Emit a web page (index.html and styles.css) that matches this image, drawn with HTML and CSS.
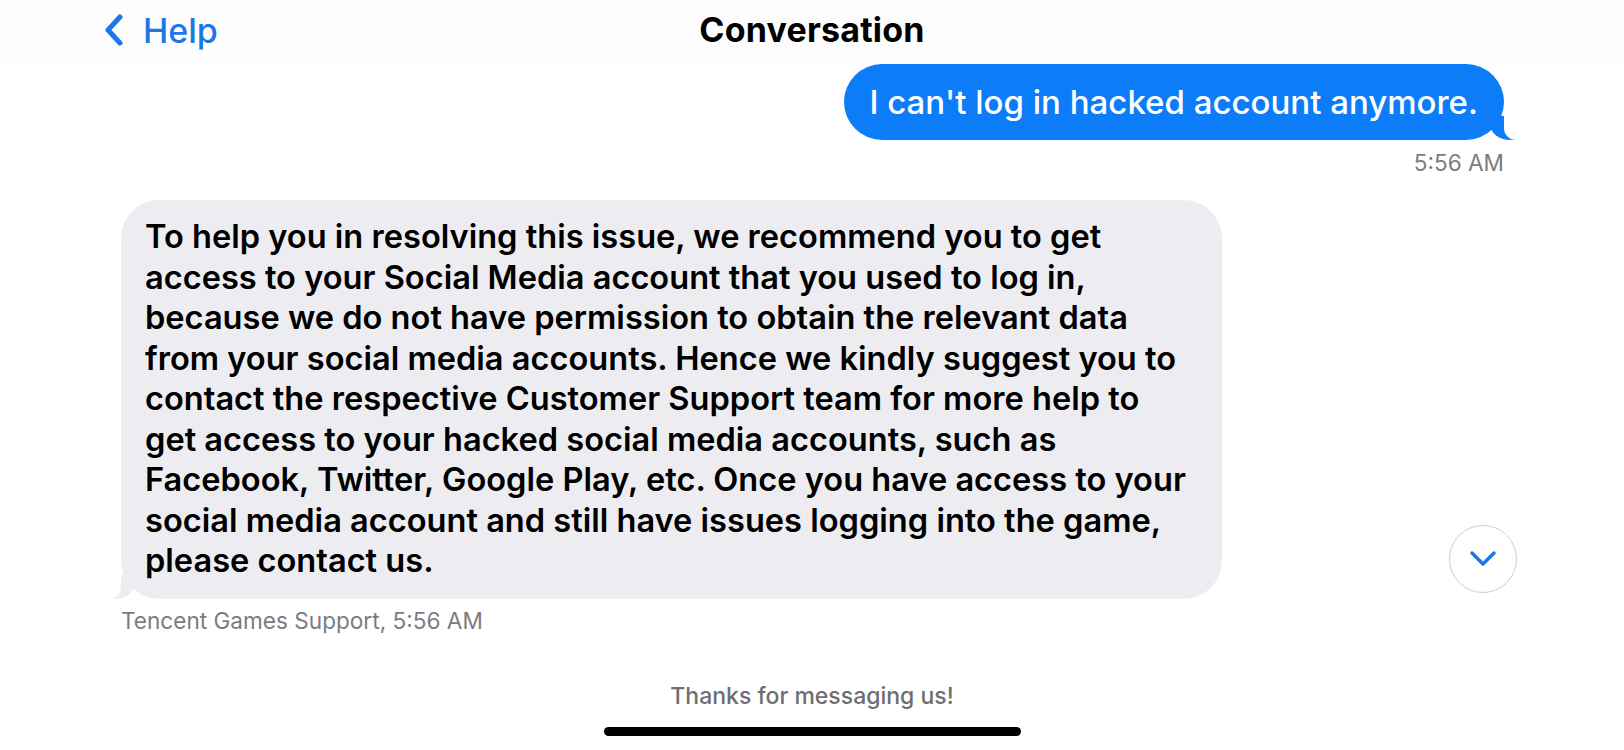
FILE: index.html
```html
<!DOCTYPE html>
<html lang="en">
<head>
    <meta charset="UTF-8">
    <meta name="viewport" content="width=device-width, initial-scale=1.0">
    <title>Conversation</title>
    <link rel="stylesheet" href="styles.css">
</head>
<body>

    <div class="header">
        <a class="back" href="#">
            <svg class="back-icon" width="22" height="32" viewBox="0 0 22 32">
                <path d="M17 3 L5 16 L17 29" fill="none" stroke="#1b78e6" stroke-width="5" stroke-linecap="round" stroke-linejoin="round"/>
            </svg>
            <span>Help</span>
        </a>
        <div class="title">Conversation</div>
        <div class="spacer"></div>
    </div>

    <div class="thread">
        <div class="row row-sent">
            <div class="bubble sent">I can't log in hacked account anymore.</div>
        </div>
        <div class="stamp stamp-sent">5:56 AM</div>

        <div class="row row-received">
            <div class="bubble received">
                To help you in resolving this issue, we recommend you to get<br>
                access to your Social Media account that you used to log in,<br>
                because we do not have permission to obtain the relevant data<br>
                from your social media accounts. Hence we kindly suggest you to<br>
                contact the respective Customer Support team for more help to<br>
                get access to your hacked social media accounts, such as<br>
                Facebook, Twitter, Google Play, etc. Once you have access to your<br>
                social media account and still have issues logging into the game,<br>
                please contact us.
            </div>
            <button class="scroll-down">
                <svg width="28" height="18" viewBox="0 0 28 18">
                    <path d="M3 3 L14 14 L25 3" fill="none" stroke="#1b78e6" stroke-width="3.5" stroke-linecap="round" stroke-linejoin="round"/>
                </svg>
            </button>
        </div>
        <div class="stamp stamp-received">Tencent Games Support, 5:56 AM</div>
    </div>

    <div class="footer">
        <div class="thanks">Thanks for messaging us!</div>
        <div class="home-bar"></div>
    </div>

</body>
</html>
```

FILE: styles.css
```css
body {
    font-family: Inter, "Noto Sans", sans-serif;
    background: #ffffff;
    color: #000000;
    margin: 0;
    padding: 0;
    width: 1624px;
    height: 750px;
    overflow: hidden;
    display: flex;
    flex-direction: column;
}
.header {
    height: 58px;
    padding-bottom: 4px;
    display: grid;
    grid-template-columns: 1fr auto 1fr;
    align-items: center;
    background: #fdfdfd;
}
.back {
    display: flex;
    align-items: center;
    gap: 18px;
    padding-left: 103px;
    padding-top: 2px;
    color: #1b78e6;
    text-decoration: none;
    font-size: 34px;
    font-weight: 500;
}
.back-icon {
    display: block;
}
.title {
    font-size: 34px;
    font-weight: 700;
    letter-spacing: 0.2px;
}
.thread {
    display: flex;
    flex-direction: column;
    padding: 2px 120px 0 121px;
}
.row {
    display: flex;
    position: relative;
}
.row-sent {
    justify-content: flex-end;
}
.bubble {
    position: relative;
    border-radius: 38px;
    line-height: 40px;
}
.sent {
    background: #0d7cf8;
    color: #ffffff;
    font-size: 33px;
    font-weight: 500;
    padding: 18px 26px 18px 25px;
}
.sent::before {
    content: "";
    position: absolute;
    bottom: 0;
    right: -12px;
    width: 26px;
    height: 24px;
    background: #0d7cf8;
    border-bottom-left-radius: 20px 16px;
}
.sent::after {
    content: "";
    position: absolute;
    bottom: 0;
    right: -26px;
    width: 26px;
    height: 24px;
    background: #ffffff;
    border-bottom-left-radius: 12px;
}
.received {
    background: #ededf1;
    font-size: 32.6px;
    font-weight: 600;
    line-height: 40.5px;
    padding: 16px 36px 18px 24px;
    margin-top: 24px;
}
.received::before {
    content: "";
    position: absolute;
    bottom: 0;
    left: -14px;
    width: 28px;
    height: 24px;
    background: #ededf1;
    border-bottom-right-radius: 20px 16px;
}
.received::after {
    content: "";
    position: absolute;
    bottom: 0;
    left: -28px;
    width: 28px;
    height: 24px;
    background: #ffffff;
    border-bottom-right-radius: 12px;
}
.stamp {
    font-size: 22.6px;
    color: #7c7c80;
    line-height: 26px;
}
.stamp-sent {
    text-align: right;
    margin-top: 10px;
}
.stamp-received {
    margin-top: 9px;
}
.scroll-down {
    position: absolute;
    right: -13px;
    bottom: 6px;
    width: 68px;
    height: 68px;
    border-radius: 50%;
    border: 1.5px solid #cfcfd3;
    background: #ffffff;
    display: flex;
    align-items: center;
    justify-content: center;
    padding: 0;
}
.footer {
    margin-top: auto;
    display: flex;
    flex-direction: column;
    align-items: center;
}
.thanks {
    font-size: 23px;
    color: #6e6e72;
    font-weight: 500;
}
.home-bar {
    width: 417px;
    height: 9px;
    border-radius: 5px;
    background: #000000;
    margin: 17px 0 14px;
}
```
